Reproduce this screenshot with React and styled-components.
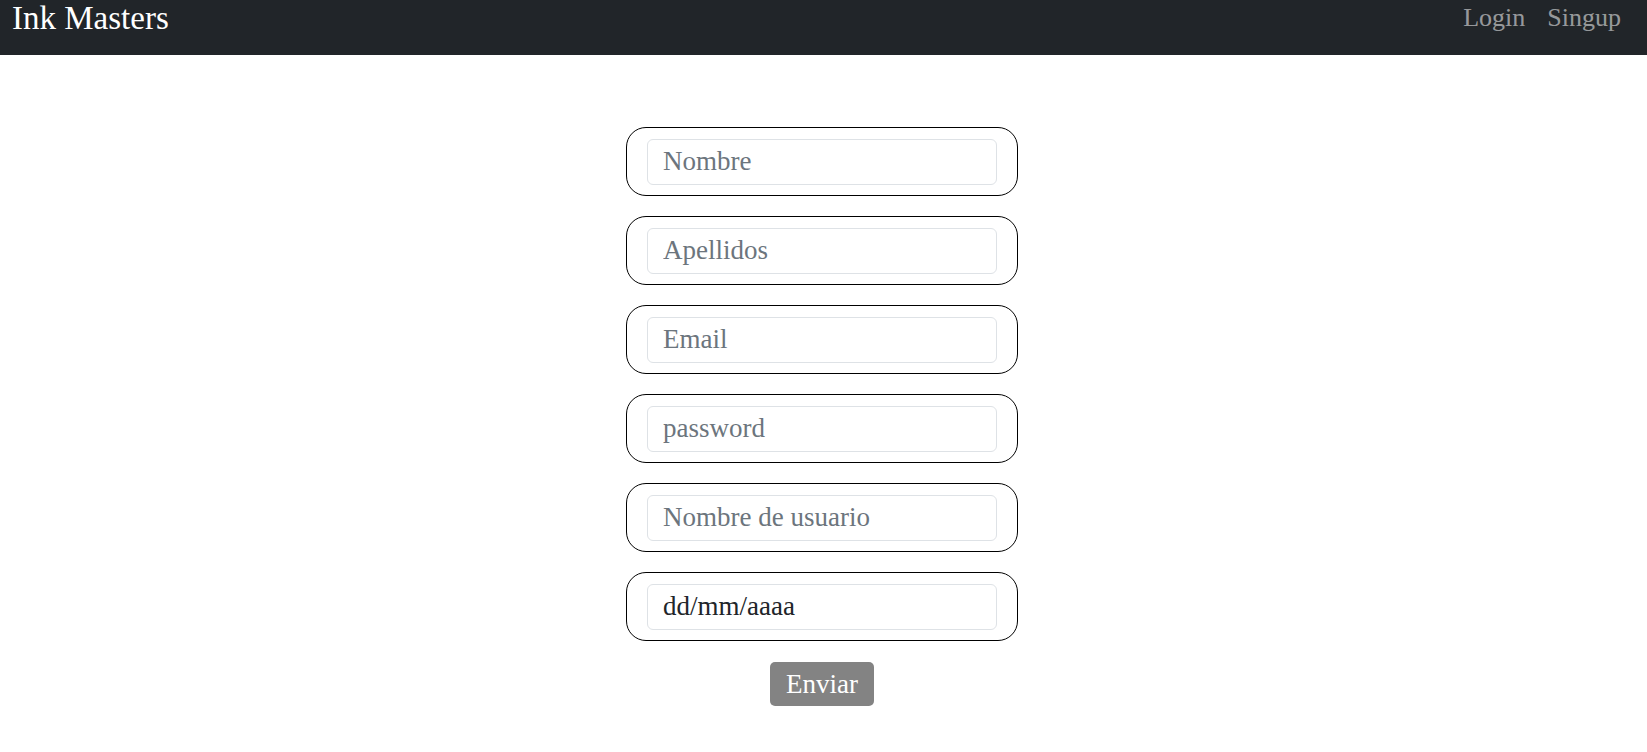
import styled, { createGlobalStyle } from "styled-components";

const GlobalStyle = createGlobalStyle`
  body {
    margin: 0;
    background: #ffffff;
    font-family: "Liberation Serif", "Times New Roman", serif;
  }
  * {
    box-sizing: border-box;
  }
`;

const NavBar = styled.nav`
  display: flex;
  align-items: flex-start;
  justify-content: space-between;
  height: 55px;
  padding: 0 26px 0 12px;
  background: #212529;
`;

const Brand = styled.a`
  margin-top: 2px;
  font-size: 33px;
  line-height: 33px;
  color: #ffffff;
  text-decoration: none;
`;

const NavLinks = styled.div`
  display: flex;
  gap: 22px;
  margin-top: 5px;
`;

const NavLink = styled.a`
  font-size: 26px;
  line-height: 26px;
  color: rgba(255, 255, 255, 0.55);
  text-decoration: none;
`;

const Form = styled.form`
  display: flex;
  flex-direction: column;
  align-items: center;
  gap: 20px;
  padding: 72px 3px 0 0;
`;

const Field = styled.div`
  display: flex;
  align-items: center;
  width: 392px;
  height: 69px;
  padding: 0 20px;
  border: 1px solid #000000;
  border-radius: 20px;
`;

const Input = styled.input`
  width: 100%;
  height: 46px;
  padding: 0 15px;
  border: 1px solid #dee2e6;
  border-radius: 6px;
  font-family: inherit;
  font-size: 27px;
  color: #212529;
  outline: none;

  &::placeholder {
    color: ${(p) => (p.$dark ? "#212529" : "#6c757d")};
  }
`;

const SubmitButton = styled.button`
  margin-top: 1px;
  height: 44px;
  padding: 0 16px;
  border: none;
  border-radius: 5px;
  background: #838383;
  color: #ffffff;
  font-family: inherit;
  font-size: 27px;
  line-height: 1;
  cursor: pointer;
`;

const fields = [
  { name: "nombre", placeholder: "Nombre" },
  { name: "apellidos", placeholder: "Apellidos" },
  { name: "email", placeholder: "Email" },
  { name: "password", placeholder: "password" },
  { name: "username", placeholder: "Nombre de usuario" },
  { name: "fecha", placeholder: "dd/mm/aaaa", dark: true },
];

export default function App() {
  return (
    <>
      <GlobalStyle />
      <NavBar>
        <Brand href="#">Ink Masters</Brand>
        <NavLinks>
          <NavLink href="#">Login</NavLink>
          <NavLink href="#">Singup</NavLink>
        </NavLinks>
      </NavBar>
      <Form onSubmit={(e) => e.preventDefault()}>
        {fields.map((f) => (
          <Field key={f.name}>
            <Input name={f.name} placeholder={f.placeholder} $dark={f.dark} />
          </Field>
        ))}
        <SubmitButton type="submit">Enviar</SubmitButton>
      </Form>
    </>
  );
}
